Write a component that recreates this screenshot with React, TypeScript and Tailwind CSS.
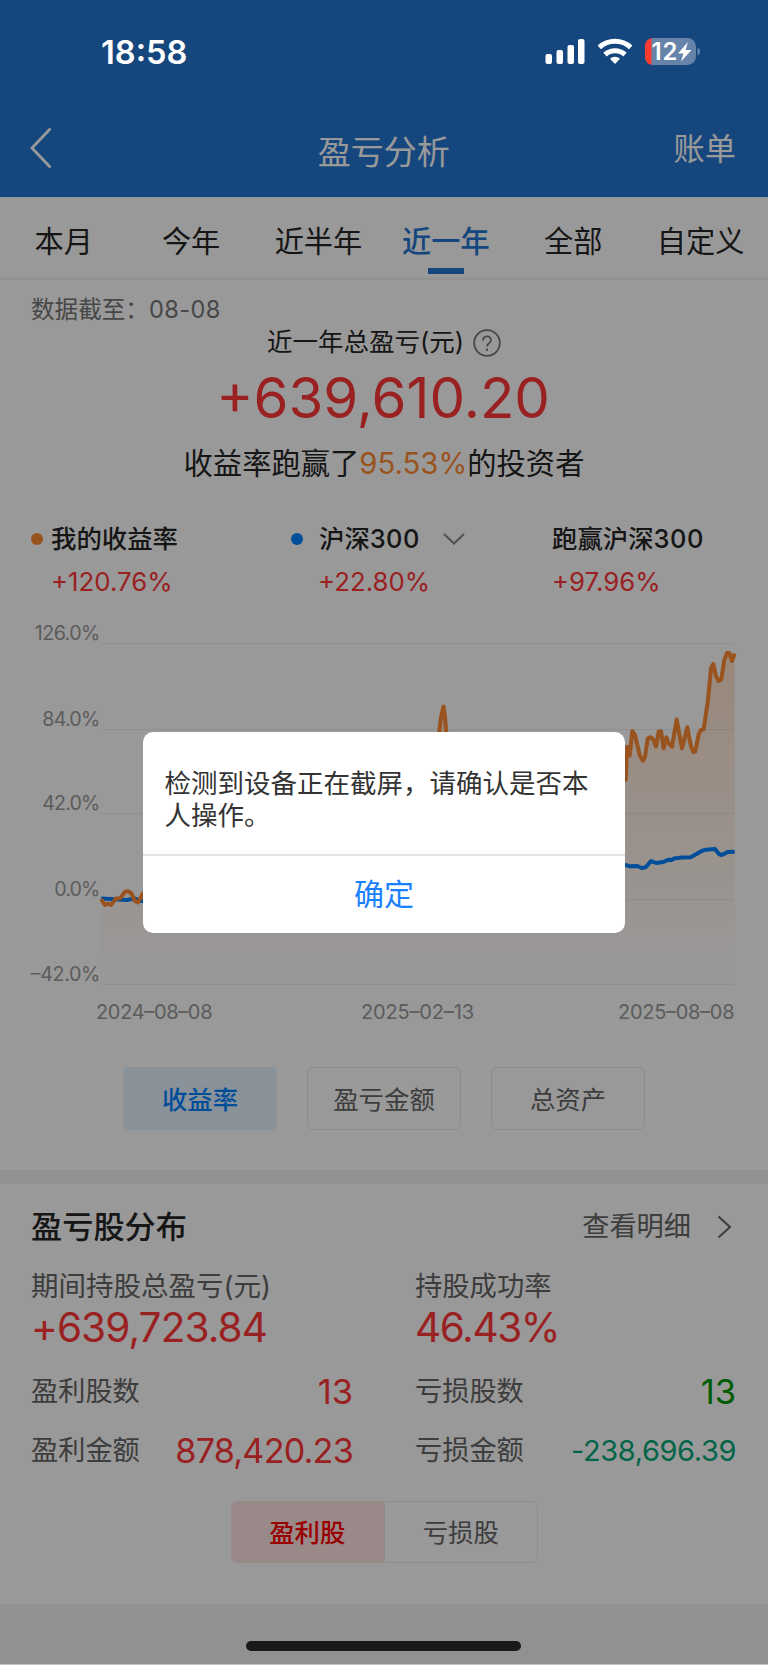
import { useState } from 'react';

const TABS = ['本月', '今年', '近半年', '近一年', '全部', '自定义'];

const METRICS = ['收益率', '盈亏金额', '总资产'];

const GRID = [
  { y: 643, label: '126.0%', width: 65.5 },
  { y: 729, label: '84.0%', width: 58 },
  { y: 813, label: '42.0%', width: 58 },
  { y: 899, label: '0.0%', width: 46 },
  { y: 984, label: '–42.0%', width: 69.5 },
];

const MY_RATE =
  '101,899 105,905 108,903.5 111,905 116,898.5 120,898.5 125,891.7 128,891.2 131,893 135,901 138,902.5 143,893.5 160,890 190,870 220,880 260,850 300,862 340,830 380,840 420,800 438,742 441,717 443.5,706.5 445,717 447,742 470,800 520,820 560,800 600,790 625.7,780 627,746.7 629.7,755.6 632.3,731 635,735 640,756 643,760.7 645,756.7 647.7,738.5 650.7,737.2 653.3,739.5 656,746.5 658.7,731.5 661,731.3 663.7,748.3 666.3,737.3 668.7,743.3 672,746.7 676.7,719.5 682,748.3 687.3,727.3 690.7,745 693.3,752 695.3,751.5 698.7,734 701,730 703.7,729.3 708,700 711,668.3 713.3,664 716,676 718.7,681 721.3,679.3 724.3,660 727,653 729.3,653 732,661 734.7,653.5';

const INDEX_RATE =
  '101,898.5 110,899 118,899.5 127,900 135,898.5 141,901 143,901 220,890 300,880 400,885 500,880 560,875 610,868 625.7,865 630,866.3 637.3,866 641.7,868 645.7,867.3 651,861 656,863 663.3,862 668.7,859.7 671,860.3 674,858.5 681.7,857.5 690.7,857.3 701.7,851 706,849.7 715,849 719,854 721.7,855 727.7,852 734.7,851.7';

function StatusBar() {
  return (
    <div className="absolute inset-x-0 top-0 z-20 flex h-[104px] items-center justify-between pl-[101px] pr-[67px] text-white">
      <span className="text-[32.6px] leading-[40px] font-semibold">18:58</span>
      <svg width="156" height="40" viewBox="0 -7 156 40" fill="#fff">
        <rect x="0.5" y="15" width="6.5" height="10" rx="2" />
        <rect x="11.5" y="11" width="6.5" height="14" rx="2" />
        <rect x="22.5" y="6" width="6.5" height="19" rx="2" />
        <rect x="33" y="0" width="6.5" height="25" rx="2" />
        <g fill="none" stroke="#fff" strokeWidth="5">
          <path d="M54.3 8.4a23.2 23.2 0 0 1 31.4 0" />
          <path d="M60 15.6a14.6 14.6 0 0 1 20 0" />
        </g>
        <path d="M70 25l-5-5.2a7.2 7.2 0 0 1 10 0z" />
        <rect x="100" y="-1" width="51" height="27" rx="8.5" fill="#6684a9" />
        <path d="M106.500 -1v27a8.500 8.500 0 0 1-6.500-8.500v-10a8.500 8.500 0 0 1 6.500-8.500z" fill="#ff3b30" />
        <path d="M152.500 8.500c3.500 1.500 3.500 6.500 0 8z" fill="#6684a9" />
        <text x="106.500" y="21.200" fontSize="24" fontWeight="600" textLength="26">12</text>
        <path d="M143 3l-10 11.500h5.500l-2.500 8 10.500-11.500h-6z" />
      </svg>
    </div>
  );
}

function RateChart() {
  return (
    <svg width="768" height="420" viewBox="0 610 768 420" className="block">
      <defs>
        <linearGradient id="area" gradientUnits="userSpaceOnUse" x1="0" y1="652" x2="0" y2="984">
          <stop offset="0" stopColor="#ff8830" stopOpacity="0.24" />
          <stop offset="1" stopColor="#ff8830" stopOpacity="0" />
        </linearGradient>
      </defs>
      {GRID.map((line) => (
        <g key={line.label}>
          <path d={`M101 ${line.y + 0.5}H734`} stroke="#eeeeee" />
          <text x={100.3 - line.width} y={line.y - 3.2} textLength={line.width} fontSize="19.7" fill="#999">
            {line.label}
          </text>
        </g>
      ))}
      <polygon points={`101,984 ${MY_RATE} 734.7,984`} fill="url(#area)" />
      <polyline points={INDEX_RATE} fill="none" stroke="#0080ff" strokeWidth="4" strokeLinejoin="round" />
      <polyline points={MY_RATE} fill="none" stroke="#ff8a35" strokeWidth="4" strokeLinejoin="round" />
      <g fontSize="20" fill="#999">
        <text x="96" y="1019" textLength="116.500">2024–08–08</text>
        <text x="361" y="1019" textLength="113">2025–02–13</text>
        <text x="618" y="1019" textLength="116.500">2025–08–08</text>
      </g>
    </svg>
  );
}

function Stat({ label, value, valueClass }: { label: string; value: string; valueClass: string }) {
  return (
    <div className="flex h-[59px] items-center justify-between">
      <span className="pt-[2px] text-[27.2px] text-[#666]">{label}</span>
      <span className={valueClass}>{value}</span>
    </div>
  );
}

export default function App() {
  const [tab, setTab] = useState('近一年');
  const [metric, setMetric] = useState('收益率');

  return (
    <div className="relative h-[1665px] w-[768px] overflow-hidden bg-white font-['Inter','Noto_Sans_CJK_SC',sans-serif] text-[#262626]">
      <StatusBar />

      {/* 顶部导航 */}
      <header className="flex h-[197px] items-end justify-between bg-[#2376d0] pr-[32px] pl-[30px] text-white">
        <svg width="62" height="42" viewBox="0 0 62 42" className="mb-[28px]" fill="none" stroke="#fff" strokeWidth="2.8">
          <path d="M20.500 1.500L2 21l18.500 19.500" />
        </svg>
        <h1 className="mb-[25px] pl-[2px] text-[33px] leading-[40px]">盈亏分析</h1>
        <button className="mb-[28px] text-[31.2px] leading-[40px]">账单</button>
      </header>

      {/* 时间范围 */}
      <nav className="flex h-[83px] w-[768px] border-b-3 border-[#f6f6f6]">
        {TABS.map((name) => (
          <button
            key={name}
            onClick={() => setTab(name)}
            className={`flex w-[127.400px] shrink-0 flex-col items-center pt-[25px] text-[29.2px] leading-[40px] ${tab === name ? 'font-medium text-[#2376d0]' : ''}`}
          >
            {name}
            {tab === name && <span className="mt-[6px] h-[6px] w-[36px] bg-[#2376d0]" />}
          </button>
        ))}
      </nav>

      {/* 总盈亏 */}
      <section className="h-[330px]">
        <p className="pt-[14px] pl-[31px] text-[23.6px] leading-[32px] text-[#777]">
          数据截至：<span className="tracking-[0.4px]">08-08</span>
        </p>
        <div className="flex h-[33px] items-center justify-center gap-[9px] text-[25.5px]">
          近一年总盈亏(元)
          <svg width="28" height="28" viewBox="0 0 28 28" fill="none" stroke="#777" strokeWidth="1.8">
            <circle cx="14" cy="14" r="12.800" />
            <path d="M10 11.500c0-5.500 8-5.500 8-.6 0 3.200-4 3.300-4 6.600M14 19.500v2.400" />
          </svg>
        </div>
        <p className="pr-[2px] text-center text-[56.400px] leading-[78px] text-[#ff3838]">+639,610.20</p>
        <p className="mt-[5px] text-center text-[29.3px] leading-[44px]">
          收益率跑赢了<span className="text-[#ff8a35]">95.53%</span>的投资者
        </p>
        <div className="mt-[35px] flex pl-[31px] text-[25.4px] leading-[36px] font-medium">
          <div className="w-[259px]">
            <div className="flex items-center gap-2">
              <i className="size-3 rounded-full bg-[#ff8a35]" />
              我的收益率
            </div>
            <p className="mt-[7px] pl-[20px] text-[25.8px] font-normal text-[#ff3838]">+120.76%</p>
          </div>
          <div className="w-[262px]">
            <div className="flex items-center">
              <i className="mr-[16px] ml-px size-3 rounded-full bg-[#0080ff]" />
              沪深<span className="tracking-[0.4px]">300</span>
              <svg width="22" height="12" viewBox="0 0 22 12" className="ml-[23px]" fill="none" stroke="#888" strokeWidth="2">
                <path d="M1 1l10 9.500L21 1" />
              </svg>
            </div>
            <p className="mt-[7px] pl-[28px] text-[25.8px] font-normal text-[#ff3838]">+22.80%</p>
          </div>
          <div>
            <div>
              跑赢沪深<span className="tracking-[0.6px]">300</span>
            </div>
            <p className="mt-[7px] text-[25.8px] font-normal text-[#ff3838]">+97.96%</p>
          </div>
        </div>
      </section>

      <RateChart />

      <div className="flex h-[140px] justify-center gap-[30px] pt-[37px]">
        {METRICS.map((name) => (
          <button
            key={name}
            onClick={() => setMetric(name)}
            className={`h-[63px] w-[154px] rounded-md pt-[3px] text-[25.4px] ${metric === name ? 'bg-[#e5f2ff] font-medium text-[#0080ff]' : 'border border-[#eaeaea] text-[#666]'}`}
          >
            {name}
          </button>
        ))}
      </div>

      {/* 盈亏股分布 */}
      <section className="h-[434px] border-t-[14px] border-[#f2f2f2] px-[31px]">
        <div className="flex h-[84px] items-center pt-[2px]">
          <h2 className="text-[31.2px] font-medium">盈亏股分布</h2>
          <span className="ml-auto text-[27.2px] text-[#666]">查看明细</span>
          <svg width="15" height="24" viewBox="0 0 15 24" className="mr-[5px] ml-[26px]" fill="none" stroke="#666" strokeWidth="2">
            <path d="M1.500 1.500L13 12 1.500 22.500" />
          </svg>
        </div>
        <div className="grid grid-cols-[322px_321px] gap-x-[62px]">
          <div>
            <div className="text-[27.5px] leading-[37px] text-[#666]">期间持股总盈亏(元)</div>
            <div className="mb-[11px] text-[40.5px] leading-[46px] tracking-[-0.9px] text-[#ff3838]">+639,723.84</div>
            <Stat label="盈利股数" value="13" valueClass="text-[34.5px] text-[#ff3838]" />
            <Stat label="盈利金额" value="878,420.23" valueClass="text-[34.200px] tracking-[-0.8px] text-[#ff3838]" />
          </div>
          <div>
            <div className="text-[27.3px] leading-[37px] text-[#666]">持股成功率</div>
            <div className="mb-[11px] text-[40.5px] leading-[46px] tracking-[-1.4px] text-[#ff3838]">46.43%</div>
            <Stat label="亏损股数" value="13" valueClass="text-[34.5px] text-[#009900]" />
            <Stat label="亏损金额" value="-238,696.39" valueClass="text-[29px] tracking-[-0.4px] text-[#06a877]" />
          </div>
        </div>
        <div className="mx-auto mt-[21px] flex h-[62px] w-[307px] text-[25.4px]">
          <button className="w-[153.500px] rounded-l-md bg-[#ffe5e5] pt-[3px] font-medium text-[#ff0000]">盈利股</button>
          <button className="flex-1 rounded-r-md border border-[#eaeaea] pt-[3px] text-[#666]">亏损股</button>
        </div>
      </section>

      <footer className="h-[61px] border-b border-[#c4c4c4] bg-[#f2f2f2]" />

      {/* 遮罩与弹窗 */}
      <div className="absolute inset-x-0 top-0 z-10 h-[1664px] bg-black/40" />
      <div className="absolute top-[1641px] left-[246px] z-20 h-[10px] w-[275px] rounded-full bg-[#191919]" />
      <div role="dialog" className="absolute top-[732px] left-[143px] z-20 h-[201px] w-[482px] rounded-[10px] bg-white">
        <p className="h-[124px] border-b-2 border-[#e5e5e5] px-[21.5px] pt-[35px] text-[26.5px] leading-[32px] text-[#333]">
          检测到设备正在截屏，请确认是否本人操作。
        </p>
        <button className="h-[77px] w-full text-[30px] text-[#1a80ff]">确定</button>
      </div>
    </div>
  );
}
